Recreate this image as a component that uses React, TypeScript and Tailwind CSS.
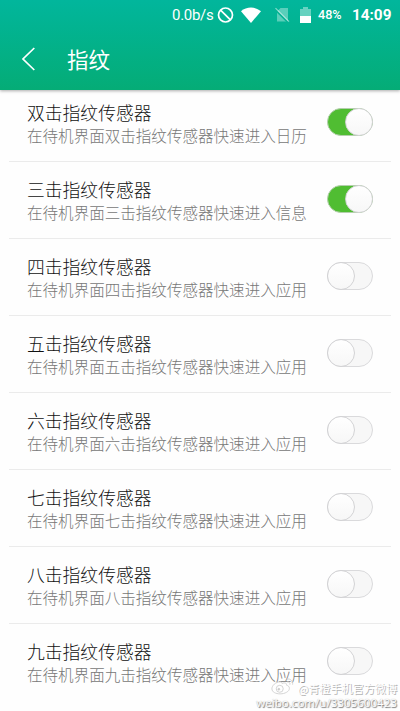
import clsx from "clsx";

const rows = [
  { count: "双", target: "日历", on: true },
  { count: "三", target: "信息", on: true },
  { count: "四", target: "应用", on: false },
  { count: "五", target: "应用", on: false },
  { count: "六", target: "应用", on: false },
  { count: "七", target: "应用", on: false },
  { count: "八", target: "应用", on: false },
  { count: "九", target: "应用", on: false },
];

function StatusBar() {
  return (
    <div className="flex h-[30px] items-center pl-[172px] font-['Roboto',sans-serif] leading-none text-white">
      <span className="w-[45px] text-[15px] whitespace-nowrap tracking-[-0.3px]">0.0b/s</span>
      <svg className="h-[17px] w-[17px]" viewBox="0 0 17 17" fill="none" stroke="white" strokeWidth="1.7">
        <circle cx="8.5" cy="8" r="7" />
        <path d="M3.6 3.1 13.4 12.9" />
      </svg>
      <svg className="ml-[7px] h-[16px] w-[20px]" viewBox="0 0 20 16" fill="white">
        <path d="M0 4.2C5.5-.6 14.5-.6 20 4.2L10 16Z" />
      </svg>
      <svg className="ml-[14px] h-[16px] w-[15px]" viewBox="0 0 15 16">
        <path d="M5.5 1H13v13.5H2V4.5Z" fill="white" fillOpacity=".35" />
        <path d="M0 2.6 13.5 16" stroke="#04b494" strokeWidth="1.6" />
        <path d="M.5 1.2 14 14.7" stroke="white" strokeOpacity=".5" strokeWidth="1.2" />
      </svg>
      <svg className="ml-[10px] h-[17px] w-[11px]" viewBox="0 0 11 17" fill="white">
        <path d="M3 0h5v2h3v7H0V2h3Z" fillOpacity=".4" />
        <path d="M0 9h11v7H0Z" />
      </svg>
      <span className="ml-[7px] w-[25px] text-[12.6px] font-medium whitespace-nowrap">48%</span>
      <span className="ml-[9px] pt-px text-[15.3px] font-bold whitespace-nowrap">14:09</span>
    </div>
  );
}

function Toggle({ on }: { on: boolean }) {
  return (
    <div
      className={clsx(
        "flex h-[28px] w-[46px] shrink-0 rounded-full border",
        on ? "justify-end border-[#b4cfac] bg-[#50bd32]" : "border-[#dadadc] bg-[#f7f7f7]"
      )}
    >
      <span className="-mx-px -my-px h-[28px] w-[28px] rounded-full border border-[#d3d3d5] bg-linear-to-b from-white to-[#f7f7f7]" />
    </div>
  );
}

function Watermark() {
  return (
    <div className="absolute right-[3px] bottom-px flex flex-col items-end whitespace-nowrap text-white">
      <div className="flex h-[12px] items-center text-[11.1px] leading-[12px] [text-shadow:1px_1px_0_#b5b5b5]">
        <svg className="-mt-[4px] mr-[4px] h-[17px] w-[23px]" viewBox="0 0 25 18" fill="none" stroke="#d0d0d0">
          <path d="M10 4C5 4 1 8 1 11.5S5 17 10 17s10-2.5 10-6c0-2-1.5-3-3-3.3 0-3-2.5-3-5-2-.3-1-.8-1.7-2-1.7Z" fill="white" />
          <circle cx="9.5" cy="11.5" r="3.8" />
          <circle cx="8.5" cy="12" r="1" fill="#c5c5c5" />
          <path d="M17 1c4-1 7 2 6.5 6M17.5 4c2-.3 3.5 1 3 3" />
        </svg>
        @青橙手机官方微博
      </div>
      <div className="pt-px font-['Open_Sans',sans-serif] text-[11.6px] leading-[15px] [text-shadow:1px_1px_1px_#777,0_0_1px_#aaa]">
        weibo.com/u/3305600423
      </div>
    </div>
  );
}

function App() {
  return (
    <main className="relative h-[711px] w-[400px] overflow-hidden bg-[#fefefe] font-['Noto_Sans_CJK_SC',sans-serif]">
      <header className="h-[90px] bg-linear-to-b from-[#02b69c] to-[#05ac76] shadow-[0_1px_3px_#aaa]">
        <StatusBar />
        <div className="flex h-[58px] items-center pl-[22px] text-white">
          <svg className="h-[24px] w-[13px]" viewBox="0 0 13 24" fill="none" stroke="white" strokeWidth="1.7">
            <path d="M12.3 1 1 12 12.3 23" />
          </svg>
          <h1 className="ml-[32px] text-[21.5px] leading-none">指纹</h1>
        </div>
      </header>

      <ul className="mx-[9px] -mt-[5px]">
        {rows.map((row) => (
          <li
            key={row.count}
            className="flex h-[77px] items-start justify-between border-b border-[#ebebeb] pr-[18px] pl-[18px] last:border-0"
          >
            <div className="pt-[15px] whitespace-nowrap">
              <p className="text-[17.8px] leading-[24px] font-light text-[#111]">{row.count}击指纹传感器</p>
              <p className="text-[15.55px] leading-[22px] font-light text-[#777]">
                在待机界面{row.count}击指纹传感器快速进入{row.target}
              </p>
            </div>
            <div className="pt-[23px]">
              <Toggle on={row.on} />
            </div>
          </li>
        ))}
      </ul>
      <Watermark />
    </main>
  );
}

export default App;
